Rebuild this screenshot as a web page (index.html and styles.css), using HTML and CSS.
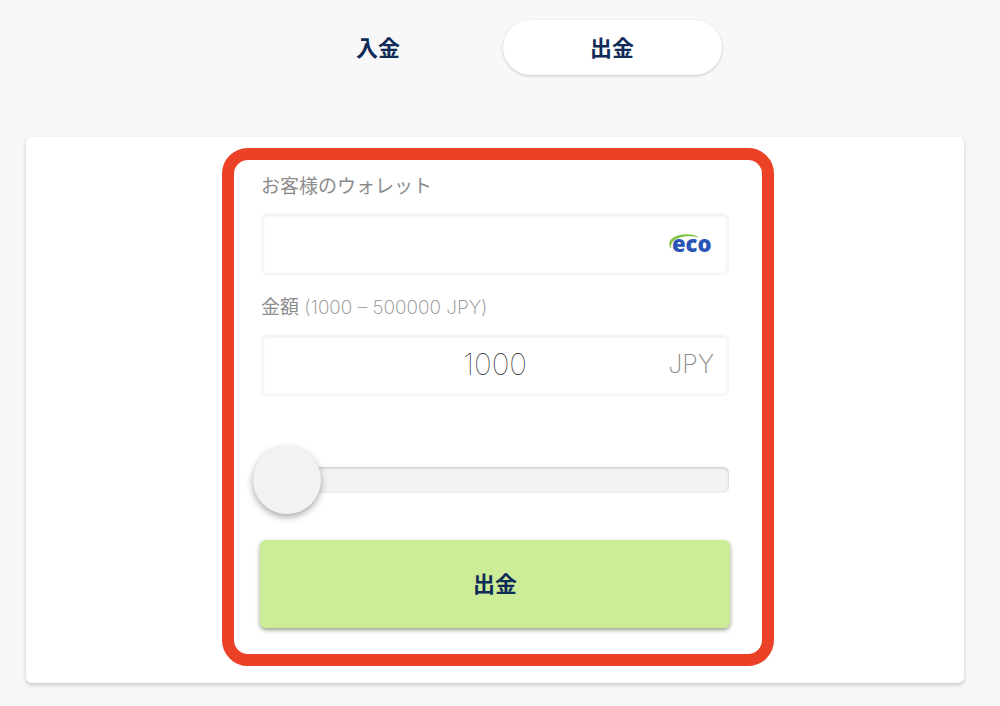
FILE: index.html
```
<!DOCTYPE html>
<html lang="ja">

<head>
    <meta charset="utf-8" />
    <meta name="viewport" content="width=device-width, initial-scale=1" />
    <title>出金</title>
    <link rel="stylesheet" href="styles.css">
</head>

<body>

<nav class="tabs">
    <button type="button" class="tab">入金</button>
    <button type="button" class="tab current">出金</button>
</nav>

<main class="card">
    <form class="frame">
        <label class="label" for="wallet">お客様のウォレット</label>
        <div class="field">
            <input type="text" id="wallet" class="input wallet">
            <svg class="eco" width="46" height="34" viewBox="0 0 46 34" role="img" aria-label="eco">
                <path d="M3 22C-1 16 2 11 10 8.500C18 6.500 26 7 31 10.500C24 8.800 16 9 10.500 11C4 13.500 2.500 17 3 22Z" fill="#7fc242" />
                <text x="4" y="25" class="eco-text">eco</text>
            </svg>
        </div>

        <label class="label" for="amount">金額 <span class="range-text">(1000 – 500000 JPY)</span></label>
        <div class="field">
            <input type="text" id="amount" class="input amount" inputmode="numeric" value="1000">
            <span class="unit">JPY</span>
        </div>

        <input type="range" class="slider" min="1000" max="500000" value="1000" aria-label="金額">

        <button type="submit" class="submit">出金</button>
    </form>
</main>

</body>

</html>
```
FILE: styles.css
```
* {
    box-sizing: border-box;
}

body {
    margin: 0;
    padding: 20px 36px 22px 26px;
    background: #f8f8f8;
    font-family: "Liberation Sans", "Noto Sans CJK JP", sans-serif;
    color: #0f2b57;
}

button {
    padding: 0 0 4px;
    border: 0;
    color: inherit;
    font-family: "Noto Sans CJK JP", sans-serif;
    font-size: 22px;
    font-weight: 700;
    cursor: pointer;
}

.tabs {
    display: flex;
    justify-content: center;
    gap: 15px;
    margin-bottom: 62px;
}

.tab {
    width: 219px;
    height: 55px;
    border-radius: 28px;
    background: transparent;
}

.tab.current {
    background: #fff;
    box-shadow: 0 1px 3px rgba(0, 0, 0, 0.2);
}

.card {
    padding: 11px 0 17px 6px;
    border-radius: 6px;
    background: #fff;
    box-shadow: 0 2px 4px rgba(0, 0, 0, 0.2);
}

.frame {
    display: flex;
    flex-direction: column;
    max-width: 552px;
    margin: 0 auto;
    padding: 12px 33px 26px 27px;
    border: 12px solid #ea4127;
    border-radius: 26px;
}

.label {
    padding-bottom: 11px;
    color: #8c8c8c;
    font-family: Inter, "Noto Sans CJK JP", sans-serif;
    font-size: 19px;
    font-weight: 400;
    line-height: 30px;
}

.range-text {
    color: #8c8c8c;
    font-weight: 200;
}

.field {
    display: grid;
    align-items: center;
    margin-bottom: 18px;
}

.field > * {
    grid-area: 1 / 1;
}

.input {
    width: 100%;
    height: 62px;
    padding: 0 64px 2px;
    border: 2px solid #f6f6f6;
    border-radius: 6px;
    background: #fff;
    box-shadow: inset 0 1px 3px rgba(0, 0, 0, 0.08);
    color: #222;
    font-family: Inter, "Noto Sans CJK JP", sans-serif;
    font-size: 19px;
    font-weight: 200;
}

.amount {
    text-align: center;
    font-size: 30px;
    font-weight: 100;
}

.eco,
.unit {
    justify-self: end;
    margin-right: 15px;
}

.eco-text {
    fill: #2a55b5;
    font-family: "Open Sans", sans-serif;
    font-size: 22px;
    font-weight: 800;
}

.unit {
    padding-bottom: 2px;
    color: #8c8c8c;
    font-family: Inter, sans-serif;
    font-size: 25px;
    font-weight: 200;
}

.slider {
    width: 100%;
    height: 68px;
    margin: 32px 0 26px;
    background: transparent;
    appearance: none;
    cursor: pointer;
}

.slider::-webkit-slider-runnable-track {
    height: 26px;
    border-radius: 6px;
    background: #f2f3f3;
    box-shadow: inset 0 1px 3px rgba(0, 0, 0, 0.2);
}

.slider::-webkit-slider-thumb {
    width: 68px;
    height: 68px;
    margin: -21px 0 0 -8px;
    border-radius: 50%;
    background: #f2f2f2;
    box-shadow: 0 3px 7px rgba(0, 0, 0, 0.35);
    appearance: none;
}

.submit {
    height: 88px;
    margin: 0 -1px;
    border-radius: 6px;
    background: #cdec98;
    box-shadow: 0 2px 4px rgba(40, 60, 10, 0.5);
}
```
